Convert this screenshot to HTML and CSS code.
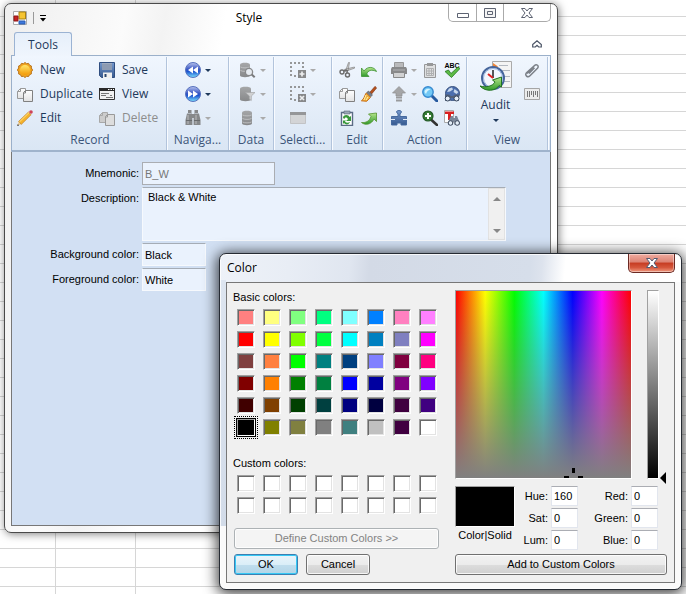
FILE: index.html
```html
<!DOCTYPE html>
<html lang="en">
<head>
<meta charset="utf-8">
<title>Style</title>
<link rel="stylesheet" href="styles.css">
</head>
<body>
<svg class="defs" aria-hidden="true">
  <defs>
    <linearGradient id="gold" x2="0" y2="1"><stop offset="0" stop-color="#ffe66b"/><stop offset="1" stop-color="#f39a08"/></linearGradient>
    <linearGradient id="steel" x2="0" y2="1"><stop offset="0" stop-color="#7599cf"/><stop offset="1" stop-color="#36598f"/></linearGradient>
    <linearGradient id="ball" x2="0" y2="1"><stop offset="0" stop-color="#b9c4ee"/><stop offset=".45" stop-color="#3856c4"/><stop offset=".6" stop-color="#1d55cf"/><stop offset="1" stop-color="#7de4ff"/></linearGradient>
    <linearGradient id="grey" x2="0" y2="1"><stop offset="0" stop-color="#9a9a9a"/><stop offset="1" stop-color="#777"/></linearGradient>
    <linearGradient id="leaf" x2="0" y2="1"><stop offset="0" stop-color="#b6e58b"/><stop offset="1" stop-color="#2f9a2b"/></linearGradient>
    <linearGradient id="paper" x2="0" y2="1"><stop offset="0" stop-color="#fff"/><stop offset="1" stop-color="#e2e2e2"/></linearGradient>
    <symbol id="i-new" viewBox="0 0 16 16"><path d="M8 .5l1.600 1.200 2-.3.9 1.800 1.900.8-.1 2L15.600 8l-1.300 1.900.1 2-1.900.8-.9 1.800-2-.2L8 15.500l-1.600-1.200-2 .2-.9-1.800-1.900-.8.1-2L.4 8l1.300-2-.1-2 1.900-.8.9-1.800 2 .3z" fill="#f2a51f" stroke="#b9741d"/><circle cx="8" cy="8" r="5" fill="url(#gold)"/></symbol>
    <symbol id="i-copy" viewBox="0 0 16 16"><path d="M3.500 2.500h5v10h-8V5.500zM3.500 2.500v3h-3" fill="url(#paper)" stroke="#999"/><path d="M8.500 4.500h7v11h-9V6.500zM8.500 4.500v2.500h-2" fill="url(#paper)" stroke="#808080"/></symbol>
    <symbol id="i-copy-off" viewBox="0 0 16 16"><path d="M3.500 2.500h5v10h-8V5.500zM3.500 2.500v3h-3" fill="#ccc" stroke="#a8a8a8"/><path d="M8.500 4.500h7v11h-9V6.500zM8.500 4.500v2.500h-2" fill="#ddd" stroke="#999"/></symbol>
    <symbol id="i-edit" viewBox="0 0 16 16"><path d="M.4 15.600l1.400-4.200 2.800 2.800z" fill="#e8c894"/><path d="M1.600 11.500L11.500 2l2.700 2.600-9.800 9.700z" fill="#f5b32b" stroke="#c17a16" stroke-width=".7"/><path d="M2.400 12L12 2.600" stroke="#ffe386"/><path d="M11.500 2l1-1 2.700 2.600-1 1z" fill="#ddd"/><circle cx="14" cy="2" r="1.800" fill="#cf4257"/><path d="M.2 16l.6-1.900 1.300 1.300z" fill="#333"/></symbol>
    <symbol id="i-save" viewBox="0 0 16 16"><path d="M.5.500h15v15H2.500l-2-2z" fill="url(#steel)" stroke="#304e80"/><path d="M3 1h10v7H3z" fill="#9eabc0"/><path d="M3 3h10M3 5h10M3 7h10" stroke="#7c8ba5"/><path d="M4 10.500h9V16H4z" fill="#efefef"/><path d="M5.500 12h2v3h-2z" fill="#27456f"/></symbol>
    <symbol id="i-view" viewBox="0 0 16 16"><path d="M.5 2.500h15v11H.5z" fill="#f2f2f2" stroke="#333"/><path d="M0 2h16v3H0z" fill="#2a2a2a"/><path d="M9 3.500h1.500m1 0h1.500m1 0h1" stroke="#fff"/><path d="M2 7.500h8M2 9.500h5M7 11.500h7M11 9.500h2" stroke="#777"/></symbol>
    <symbol id="i-prev" viewBox="0 0 16 16"><circle cx="8" cy="8" r="7.500" fill="url(#ball)" stroke="#5872be"/><path d="M8 4.500v7L3 8zM13 4.500v7L8 8z" fill="#fff"/></symbol>
    <symbol id="i-next" viewBox="0 0 16 16"><circle cx="8" cy="8" r="7.500" fill="url(#ball)" stroke="#5872be"/><path d="M3 4.500v7L8 8zM8 4.500v7L13 8z" fill="#fff"/></symbol>
    <symbol id="i-bino" viewBox="0 0 16 16"><path d="M3 0h3.500v3H3zM9.500 0H13v3H9.500zM2 3.500h5l.4 6V15H.5v-5zM9 3.500h5l1.500 6.500v5H8.600V9.500zM7 4h2v4H7z" fill="#777"/><path d="M3 5v9M11 5v9" stroke="#b5b5b5"/><path d="M1 10.500h6M9 10.500h6" stroke="#555"/></symbol>
    <symbol id="db" viewBox="0 0 16 16"><path d="M2 2.500C2 .300 12 .300 12 2.500v11c0 2.300-10 2.300-10 0z" fill="url(#grey)"/><path d="M2.500 5c2 1.200 7 1.200 9 0m-9 3.500c2 1.200 7 1.200 9 0m-9 3.500c2 1.200 7 1.200 9 0" fill="none" stroke="#c4c4c4" stroke-width=".8"/></symbol>
    <symbol id="i-dbfind" viewBox="0 0 16 16"><path d="M0 2.500C0 .300 10 .300 10 2.500v11c0 2.300-10 2.300-10 0z" fill="url(#grey)"/><path d="M.5 5c2 1.200 7 1.200 9 0m-9 3.500c2 1.200 7 1.200 9 0" fill="none" stroke="#c4c4c4" stroke-width=".8"/><circle cx="9" cy="10" r="3.600" fill="#e6eaef" stroke="#777" stroke-width="1.300"/><path d="M11.700 12.500l3 2.700" stroke="#666" stroke-width="2"/></symbol>
    <symbol id="i-dbfilter" viewBox="0 0 16 16"><path d="M0 2.500C0 .300 11 .300 11 2.500v11c0 2.300-11 2.300-11 0z" fill="url(#grey)"/><path d="M5.500 6.500h9.500L11.300 10v4.500L9.300 13v-3z" fill="#ccc" stroke="#999" stroke-width=".7"/></symbol>
    <symbol id="i-seladd" viewBox="0 0 16 16"><path d="M0 1h14M1 4v11M4 14h4M13 4v3" fill="none" stroke="#888" stroke-width="2" stroke-dasharray="2 2"/><path d="M8 8h8v8H8z" fill="#777"/><path d="M12 9.500v5M9.500 12h5" stroke="#eee" stroke-width="1.700"/></symbol>
    <symbol id="i-seldel" viewBox="0 0 16 16"><path d="M0 1h14M1 4v11M4 14h4M13 4v3" fill="none" stroke="#888" stroke-width="2" stroke-dasharray="2 2"/><path d="M8 8h8v8H8z" fill="#777"/><path d="M10 10l4 4M14 10l-4 4" stroke="#eee" stroke-width="1.700"/></symbol>
    <symbol id="i-panel" viewBox="0 0 16 16"><path d="M.5 2.500h15v11H.5z" fill="#d1d1d1" stroke="#bdbdbd"/><path d="M0 2h16v3H0z" fill="#888"/></symbol>
    <symbol id="i-cut" viewBox="0 0 16 16"><path d="M9.500.500l1 0-1.500 8.500-2-1.500zM15.500 5l0 1.200L6 9.500l-.3-2.200z" fill="#ccc" stroke="#777" stroke-width=".6"/><circle cx="3" cy="10" r="2" fill="none" stroke="#6b6b6b" stroke-width="1.400"/><circle cx="8.500" cy="13" r="2" fill="none" stroke="#6b6b6b" stroke-width="1.400"/><path d="M4.500 9l3-1M8 11l.3-3" stroke="#6b6b6b" stroke-width="1.500"/></symbol>
    <symbol id="i-undo" viewBox="0 0 16 16"><path d="M.5 6v8.500h7.500L5.700 12C7 8.500 10.500 7 15.500 9.500 13.500 4.500 6.500 3.800 3 9z" fill="url(#leaf)" stroke="#3c9231" stroke-width=".8"/></symbol>
    <symbol id="i-redo" viewBox="0 0 16 16"><path d="M15.500 3v8.500L13 9C10 15 4 15.500.5 12.500 5 13 8.500 11 10 6.500L7.500 4z" fill="url(#leaf)" stroke="#55932e" stroke-width=".8"/></symbol>
    <symbol id="i-brush" viewBox="0 0 16 16"><path d="M14 .3l1.700 1.600-5 6-1.900-1.600z" fill="#b4511d" stroke="#752c12" stroke-width=".5"/><path d="M7.500 5l4 4-1.700 1.800L5.600 6.600z" fill="#777d88" stroke="#444" stroke-width=".5"/><path d="M5.200 7l4.300 4.300-3.800 4L.4 14.800c3-2 2.600-4.500 4.800-7.800z" fill="#f0b13c" stroke="#c86e18"/><path d="M5 9l-2 5M7 11l-2 3" stroke="#fff3ae"/></symbol>
    <symbol id="i-paste" viewBox="0 0 16 16"><path d="M2.500 2.500h11v13h-11z" fill="#fff" stroke="#5b6b85" stroke-width="1.400"/><path d="M5 1h6v3H5z" fill="#9ba6b5" stroke="#58657b" stroke-width=".6"/><path d="M4 8c0-4 6-3.500 6.500-1L12 6v5H7l2-1.800C8 7 6 7 5.500 9zM4 10.500h3l-1 1c1 1.500 3 1.500 5 .500-1 3-4.500 3-6 1l-1 1z" fill="#38983a"/></symbol>
    <symbol id="i-print" viewBox="0 0 16 16"><path d="M3.500.500h9v5h-9z" fill="#b1b1b1" stroke="#888"/><path d="M1 5h14l1 2v5H0V7z" fill="#777"/><path d="M2 8h12" stroke="#aaa"/><path d="M2.500 10.500h11v5h-11z" fill="#cdcdcd" stroke="#777"/></symbol>
    <symbol id="i-clip" viewBox="0 0 16 16"><path d="M2.500 2.500h11v13h-11z" fill="#ddd" stroke="#888"/><path d="M5 1h6v3H5z" fill="#888"/><path d="M4.500 6.500h7v7h-7zM4.500 9h7M4.500 11.500h7M7 6.500v7M9.500 6.500v7" fill="none" stroke="#a5a5a5"/></symbol>
    <symbol id="i-spell" viewBox="0 0 16 16"><text x="8" y="6" class="icon-abc" text-anchor="middle">ABC</text><path d="M1 9.500L4.500 8l2.500 3.500L14 5l2 1.500-8.500 9z" fill="#5dbb46" stroke="#257a20" stroke-width=".8"/></symbol>
    <symbol id="i-up" viewBox="0 0 16 16"><path d="M8 .5L14.500 7H11v3H5V7H1.500z" fill="#999" stroke="#808080" stroke-width=".7"/><path d="M5 11.500h6M5 14.500h6" stroke="#8c8c8c" stroke-width="2"/></symbol>
    <symbol id="i-lens" viewBox="0 0 16 16"><path d="M9.500 9.500L15 15" stroke="#275a9f" stroke-width="3" stroke-linecap="round"/><circle cx="6" cy="6" r="5.200" fill="#72c8f5" stroke="#3589d0" stroke-width="1.400"/><path d="M2.500 6C3 3 6 2 8.500 3.500 6.500 4 5 5 4 8z" fill="#d5f4ff"/></symbol>
    <symbol id="i-globe" viewBox="0 0 16 16"><circle cx="8.500" cy="7.500" r="7" fill="#4b6eae" stroke="#38507d"/><path d="M5 2.500l3-1 1 2-3 2-3 .5zM10.500 3l4 3-2 2-3-2z" fill="#c8d8ec"/><path d="M1 8.500h4L7 10h2l2-1.500h4V15h-5v-3H6v3H1z" fill="#53617a"/><circle cx="3.700" cy="12.500" r="2.500" fill="#e5edf7" stroke="#37475f"/><circle cx="12.500" cy="12.500" r="2.500" fill="#e5edf7" stroke="#37475f"/></symbol>
    <symbol id="i-plug" viewBox="0 0 16 16"><path d="M5.500 2C5.500 0 10.500 0 10.500 2L9 4V6.500h6.500v8.500H10V13H6v2H.5V6.500H7V4z" fill="url(#steel)" stroke="#466a9f"/><path d="M0 9.500h4m8 0h4" stroke="#dfeaf8"/></symbol>
    <symbol id="i-zoomin" viewBox="0 0 16 16"><path d="M9.500 10L15 15" stroke="#333" stroke-width="2.600" stroke-linecap="round"/><circle cx="6" cy="6" r="5" fill="#367d35" stroke="#225825" stroke-width="1.200"/><path d="M6 3v6M3 6h6" stroke="#fff" stroke-width="2"/></symbol>
    <symbol id="i-findtext" viewBox="0 0 16 16"><path d="M.5.500h9v12h-9z" fill="#fff" stroke="#aaa"/><path d="M1 1.500h9v2.500H7V10H4V4H1z" fill="#d92020"/><path d="M7 6h2v2h2V6h2l2.500 6v3h-5v-3H9v3H4v-3z" fill="#7b8799"/><circle cx="6.500" cy="13" r="2.300" fill="#e3edf7" stroke="#3c485c"/><circle cx="13.200" cy="13" r="2.300" fill="#e3edf7" stroke="#3c485c"/></symbol>
    <symbol id="i-attach" viewBox="0 0 16 16"><path d="M3 11.500l7.500-8c2-2 5 .500 3 2.700l-7.500 7.500c-2.500 2.500-5.500-.5-3.500-3L10 4m-5 7.500l5.500-5.700" fill="none" stroke="#7b8088" stroke-width="1.500"/></symbol>
    <symbol id="i-bar" viewBox="0 0 16 16"><path d="M.5 2.500h15v11H.5z" fill="#ececec" stroke="#a5a5a5"/><path d="M3.500 5v6m2-6v6m2-6v4m2-4v6m2-6v4m2-4v6" stroke="#777"/></symbol>
    <symbol id="i-audit" viewBox="0 0 32 32"><path d="M12.500.500h19v26h-19z" fill="#f4f4f4" stroke="#aaa"/><path d="M13 2l5 3.500-5 3.500z" fill="#ef8436"/><path d="M19 4.500h9M18 9.500h12M24 15.500h6M24 20.500h6" stroke="#b3b8c0"/><circle cx="13" cy="17" r="11" fill="#f2f7ff" stroke="#46659b" stroke-width="2"/><circle cx="13" cy="17" r="9.500" fill="none" stroke="#96b3df"/><path d="M13 9v8" stroke="#222" stroke-width="1.500"/><path d="M13 17l-5-4" stroke="#d22" stroke-width="2"/><path d="M0 25c6 2 13 0 15-4l-2.500-2 9-3v10l-2.500-1.500C16 30 6 31.500 0 25z" fill="url(#leaf)" stroke="#217222"/></symbol>
  </defs>
</svg>

<main class="desktop">
<section class="window app" aria-label="Style">
  <header class="caption">
    <svg class="app-icon" viewBox="0 0 14 14" aria-hidden="true"><path d="M.5.500h13v13H.5z" fill="#fff" stroke="#aaa"/><path d="M6 1h6.500v7H6z" fill="#f5c431" stroke="#a98211"/><path d="M1 5h4v5H1z" fill="#c92222" stroke="#8c1717"/><path d="M6 10h6v3H6z" fill="#3d79de" stroke="#2b5cb0"/></svg>
    <span class="divider"></span>
    <button class="qat" aria-label="Customize toolbar"><svg viewBox="0 0 6 7"><path d="M0 .5h6" stroke="#000"/><path d="M0 3h6L3 6.500z"/></svg></button>
    <h1 class="title">Style</h1>
    <div class="controls">
      <button aria-label="Minimize"><svg viewBox="0 0 14 12"><path d="M1.500 6.500h11v4h-11z" fill="#fff" stroke="#5d6372"/></svg></button>
      <button aria-label="Maximize"><svg viewBox="0 0 14 12"><path d="M1.500 1.500h11v9h-11zM4.500 4.500h5v3h-5z" fill="#f4f4f4" stroke="#5d6372"/></svg></button>
      <button class="wide" aria-label="Close"><svg viewBox="0 0 14 12"><path d="M1.500 1.500h3.500L7 4l2-2.500h3.500L9 6l3.500 4.500H9L7 8l-2 2.500H1.500L5 6z" fill="#fff" stroke="#5d6372"/></svg></button>
    </div>
  </header>
  <nav class="tabs">
    <button class="tab">Tools</button>
    <button class="fold" aria-label="Collapse ribbon"><svg viewBox="0 0 10 8"><path d="M.7 4.500L5 .8l4.300 3.700V7H6.700L5 5.300 3.300 7H.7z" fill="#fff" stroke="#4c5567" stroke-width="1.200"/></svg></button>
  </nav>
  <div class="ribbon">
    <section class="group g-record">
      <div class="rows">
        <button class="cmd"><svg><use href="#i-new"/></svg>New</button>
        <button class="cmd"><svg><use href="#i-save"/></svg>Save</button>
        <button class="cmd"><svg><use href="#i-copy"/></svg>Duplicate</button>
        <button class="cmd"><svg><use href="#i-view"/></svg>View</button>
        <button class="cmd"><svg><use href="#i-edit"/></svg>Edit</button>
        <button class="cmd" disabled><svg><use href="#i-copy-off"/></svg>Delete</button>
      </div>
      <h2>Record</h2>
    </section>
    <section class="group g-nav">
      <div class="rows">
        <button class="ico drop" aria-label="Previous"><svg><use href="#i-prev"/></svg></button>
        <button class="ico drop" aria-label="Next"><svg><use href="#i-next"/></svg></button>
        <button class="ico drop" aria-label="Find" disabled><svg><use href="#i-bino"/></svg></button>
      </div>
      <h2>Naviga...</h2>
    </section>
    <section class="group g-data">
      <div class="rows">
        <button class="ico drop" aria-label="Search data" disabled><svg><use href="#i-dbfind"/></svg></button>
        <button class="ico drop" aria-label="Filter data" disabled><svg><use href="#i-dbfilter"/></svg></button>
        <button class="ico drop" aria-label="Data source" disabled><svg><use href="#db"/></svg></button>
      </div>
      <h2>Data</h2>
    </section>
    <section class="group g-select">
      <div class="rows">
        <button class="ico drop" aria-label="Add to selection" disabled><svg><use href="#i-seladd"/></svg></button>
        <button class="ico drop" aria-label="Clear selection" disabled><svg><use href="#i-seldel"/></svg></button>
        <button class="ico" aria-label="Selection panel" disabled><svg><use href="#i-panel"/></svg></button>
      </div>
      <h2>Selecti...</h2>
    </section>
    <section class="group g-edit">
      <div class="rows">
        <button class="ico" aria-label="Cut"><svg><use href="#i-cut"/></svg></button>
        <button class="ico" aria-label="Undo"><svg><use href="#i-undo"/></svg></button>
        <button class="ico" aria-label="Copy"><svg><use href="#i-copy"/></svg></button>
        <button class="ico" aria-label="Clear"><svg><use href="#i-brush"/></svg></button>
        <button class="ico" aria-label="Paste"><svg><use href="#i-paste"/></svg></button>
        <button class="ico" aria-label="Redo"><svg><use href="#i-redo"/></svg></button>
      </div>
      <h2>Edit</h2>
    </section>
    <section class="group g-action">
      <div class="rows">
        <button class="ico drop" aria-label="Print" disabled><svg><use href="#i-print"/></svg></button>
        <button class="ico" aria-label="Report" disabled><svg><use href="#i-clip"/></svg></button>
        <button class="ico" aria-label="Spelling"><svg><use href="#i-spell"/></svg></button>
        <button class="ico drop" aria-label="Export" disabled><svg><use href="#i-up"/></svg></button>
        <button class="ico" aria-label="Zoom"><svg><use href="#i-lens"/></svg></button>
        <button class="ico" aria-label="Find online"><svg><use href="#i-globe"/></svg></button>
        <button class="ico" aria-label="Plug-ins"><svg><use href="#i-plug"/></svg></button>
        <button class="ico" aria-label="Zoom in"><svg><use href="#i-zoomin"/></svg></button>
        <button class="ico" aria-label="Find text"><svg><use href="#i-findtext"/></svg></button>
      </div>
      <h2>Action</h2>
    </section>
    <section class="group g-view">
      <div class="rows">
        <button class="big drop"><svg><use href="#i-audit"/></svg>Audit</button>
        <button class="ico" aria-label="Attachments"><svg><use href="#i-attach"/></svg></button>
        <button class="ico" aria-label="Barcode"><svg><use href="#i-bar"/></svg></button>
      </div>
      <h2>View</h2>
    </section>
  </div>
  <form class="form">
    <label for="mnemonic">Mnemonic:</label>
    <input class="mid" id="mnemonic" value="B_W" disabled>
    <label for="description">Description:</label>
    <div class="memo">
      <textarea id="description">Black &amp; White</textarea>
      <div class="scroll" aria-hidden="true"><i class="up"></i><i class="down"></i></div>
    </div>
    <label for="bg">Background color:</label>
    <input class="short" id="bg" value="Black">
    <label for="fg">Foreground color:</label>
    <input class="short" id="fg" value="White">
  </form>
</section>

<section class="window dialog" role="dialog" aria-label="Color">
  <header class="dialog-caption">
    <h1>Color</h1>
    <button class="close" aria-label="Close"><svg viewBox="0 0 14 12"><path d="M1.500 1.500h3.500L7 4l2-2.500h3.500L9 6l3.500 4.500H9L7 8l-2 2.500H1.500L5 6z" fill="#fff" stroke="#535a70"/></svg></button>
  </header>
  <div class="client">
    <div class="palette">
      <h2>Basic colors:</h2>
      <div class="swatches basic">
        <button style="--c:#ff8080"></button><button style="--c:#ffff80"></button><button style="--c:#80ff80"></button><button style="--c:#00ff80"></button><button style="--c:#80ffff"></button><button style="--c:#0080ff"></button><button style="--c:#ff80c0"></button><button style="--c:#ff80ff"></button>
        <button style="--c:#ff0000"></button><button style="--c:#ffff00"></button><button style="--c:#80ff00"></button><button style="--c:#00ff40"></button><button style="--c:#00ffff"></button><button style="--c:#0080c0"></button><button style="--c:#8080c0"></button><button style="--c:#ff00ff"></button>
        <button style="--c:#804040"></button><button style="--c:#ff8040"></button><button style="--c:#00ff00"></button><button style="--c:#008080"></button><button style="--c:#004080"></button><button style="--c:#8080ff"></button><button style="--c:#800040"></button><button style="--c:#ff0080"></button>
        <button style="--c:#800000"></button><button style="--c:#ff8000"></button><button style="--c:#008000"></button><button style="--c:#008040"></button><button style="--c:#0000ff"></button><button style="--c:#0000a0"></button><button style="--c:#800080"></button><button style="--c:#8000ff"></button>
        <button style="--c:#400000"></button><button style="--c:#804000"></button><button style="--c:#004000"></button><button style="--c:#004040"></button><button style="--c:#000080"></button><button style="--c:#000040"></button><button style="--c:#400040"></button><button style="--c:#400080"></button>
        <button class="picked" style="--c:#000000"></button><button style="--c:#808000"></button><button style="--c:#808040"></button><button style="--c:#808080"></button><button style="--c:#408080"></button><button style="--c:#c0c0c0"></button><button style="--c:#400040"></button><button style="--c:#ffffff"></button>
      </div>
      <h2>Custom colors:</h2>
      <div class="swatches custom">
        <button></button><button></button><button></button><button></button><button></button><button></button><button></button><button></button>
        <button></button><button></button><button></button><button></button><button></button><button></button><button></button><button></button>
      </div>
      <button class="btn define" disabled>Define Custom Colors &gt;&gt;</button>
      <div class="answers">
        <button class="btn default">OK</button>
        <button class="btn">Cancel</button>
      </div>
    </div>
    <div class="mixer">
      <div class="fields">
        <div class="spectrum"><svg class="cross" viewBox="0 0 19 10" aria-hidden="true"><path d="M8 0h3v5H8zM0 8h5v2H0zM14 8h5v2h-5z"/></svg></div>
        <div class="lum"><svg class="arrow" viewBox="0 0 6 12" aria-hidden="true"><path d="M6 0v12L0 6z"/></svg></div>
      </div>
      <div class="values">
        <div class="preview"><div class="sample"></div><span>Color|Solid</span></div>
        <div class="nums">
          <label for="hue">Hue:</label><input id="hue" value="160">
          <label for="red">Red:</label><input id="red" value="0">
          <label for="sat">Sat:</label><input id="sat" value="0">
          <label for="green">Green:</label><input id="green" value="0">
          <label for="lum">Lum:</label><input id="lum" value="0">
          <label for="blue">Blue:</label><input id="blue" value="0">
        </div>
      </div>
      <button class="btn add">Add to Custom Colors</button>
    </div>
  </div>
</section>
</main>
</body>
</html>
```
FILE: styles.css
```css
* { box-sizing: border-box; }
html, body { margin: 0; height: 100%; }
body {
  font: 11px/13px "Liberation Sans", Arial, sans-serif;
  color: #000;
}
h1, h2 { margin: 0; font: inherit; }
button, input, textarea { font: inherit; color: inherit; margin: 0; }
button { padding: 0; border: 0; background: none; }
svg { display: block; flex: none; }
.defs { position: absolute; width: 0; height: 0; }

.desktop {
  position: relative;
  min-height: 100%;
  overflow: hidden;
  background:
    linear-gradient(#d6d6d6, #d6d6d6) 55px 0 / 1px 100% no-repeat,
    linear-gradient(#d6d6d6, #d6d6d6) 135px 0 / 1px 100% no-repeat,
    repeating-linear-gradient(#fff 0 18px, #d6d6d6 18px 19px) 0 -2px / 100% 200vh;
}
.window {
  position: absolute;
  border: 1px solid #4a4a4a;
  border-radius: 7px;
}

/* Application window */
.app {
  left: 4px;
  right: 128px;
  top: 3px;
  padding: 0 6px 6px;
  background: linear-gradient(100deg, #eee 0, #fbfbfb 120px, #f3f3f3 160px, #fff 220px);
  box-shadow: 1px 1px 9px rgba(0, 0, 0, .5);
}
.caption {
  display: flex;
  align-items: flex-start;
  height: 28px;
}
.app-icon { width: 14px; height: 14px; margin: 7px 6px 0 2px; }
.divider { width: 1px; height: 12px; margin: 8px 6px 0 0; background: #999; }
.qat { margin-top: 11px; }
.qat svg { width: 6px; height: 7px; }
.title {
  flex: 1;
  padding: 5px 0 0 4px;
  font: 12px/18px "Open Sans", sans-serif;
  text-align: center;
}
.controls {
  display: flex;
  height: 18px;
  border: 1px solid #aaa;
  border-top: 0;
  border-radius: 0 0 5px 5px;
}
.controls button { display: grid; place-items: center; width: 27px; }
.controls button + button { border-left: 1px solid #aaa; }
.controls .wide { width: 47px; }
.controls svg, .close svg { width: 14px; height: 12px; }

.tabs { display: flex; justify-content: space-between; height: 23px; }
.tab {
  width: 58px;
  height: 24px;
  margin-left: 3px;
  z-index: 1;
  border: 1px solid #9bb3d3;
  border-bottom: 0;
  border-radius: 3px 3px 0 0;
  background: linear-gradient(#e6effa, #eff5fd);
  color: #1e395b;
  font: 12px/20px "Open Sans", sans-serif;
}
.fold { margin: 8px 9px 0 0; align-self: flex-start; }
.fold svg { width: 10px; height: 8px; }

.ribbon {
  display: flex;
  height: 97px;
  padding: 1px 0 0 2px;
  border: 1px solid #9bb0ca;
  border-bottom: 2px solid #9fb3cc;
  background: linear-gradient(#f0f6fe, #dae6f4);
  color: #1e395b;
  font: 12px/16px "Open Sans", sans-serif;
}
.group {
  flex: none;
  border-right: 1px solid #b2c4dc;
  box-shadow: 1px 0 #f8fbff;
}
.group h2 { text-align: center; line-height: 20px; color: #3b5579; white-space: nowrap; }
.rows { display: grid; grid-template-rows: repeat(3, 24px); height: 73px; padding-top: 1px; }
.g-record { width: 153px; }
.g-record .rows { grid-template-columns: 82px 1fr; padding-left: 3px; }
.g-nav { width: 62px; }
.g-nav .rows { padding-left: 18px; }
.g-data { width: 45px; }
.g-data .rows { padding-left: 11px; }
.g-select { width: 58px; }
.g-select .rows { padding-left: 16px; }
.g-edit { width: 51px; }
.g-edit .rows { grid-template-columns: 22px 1fr; padding-left: 7px; }
.g-action { width: 84px; }
.g-action .rows { grid-template-columns: 31px 22px 1fr; padding-left: 8px; }
.g-view { width: 81px; }
.g-view .rows { grid-template-columns: 57px 1fr; }
.cmd, .ico { display: flex; align-items: center; }
.cmd svg, .ico svg { width: 16px; height: 16px; }
.cmd { gap: 7px; }
.cmd:disabled { color: #8d8d8d; }
.ico:disabled svg { opacity: .85; }
.drop::after {
  content: "";
  border: 3px solid transparent;
  border-top: 3px solid #1e395b;
  border-bottom: 0;
  margin-left: 4px;
}
.drop:disabled::after { border-top-color: #aaa; }
.big {
  grid-row: 1 / 4;
  display: flex;
  flex-direction: column;
  align-items: center;
  padding-top: 3px;
}
.big svg { width: 32px; height: 32px; margin-bottom: 4px; }
.big::after { margin: 6px 0 0; }
.icon-abc { font: bold 7px "Liberation Sans", sans-serif; }

.form {
  display: grid;
  grid-template-columns: 127px minmax(0, 1fr);
  grid-template-rows: 23px 54px 23px 23px;
  gap: 2px 3px;
  min-height: 374px;
  padding: 10px 44px 0 0;
  align-content: start;
  border: 1px solid #777;
  border-top: 0;
  background: #d2e0f3;
}
.form label { padding-top: 5px; text-align: right; }
.form input, .memo {
  border: 1px solid #f6f9fd;
  border-top-color: #a5acb5;
  background: #eaf2fd;
}
.form input { padding: 0 2px; height: 23px; }
.form .mid { width: 133px; border: 1px solid #aaadb2; color: #777; }
.form .short { width: 64px; }
.memo { display: flex; }
.memo textarea {
  flex: 1;
  min-width: 0;
  padding: 3px 5px;
  border: 0;
  resize: none;
  overflow: hidden;
  background: none;
}
.scroll {
  display: flex;
  flex-direction: column;
  justify-content: space-between;
  align-items: center;
  width: 17px;
  padding: 8px 0 6px;
  border: 1px solid #e2e2e2;
  background: #f0f0f0;
}
.scroll i { border: 4px solid transparent; }
.scroll .up { border-top: 0; border-bottom-color: #888; }
.scroll .down { border-bottom: 0; border-top-color: #888; }

/* Colour dialog */
.dialog {
  left: 219px;
  right: 4px;
  top: 253px;
  padding: 0 6px 6px;
  border-color: #262b33;
  background:
    linear-gradient(#dde5f0, #d3dce9) 0 26px / 6px 246px no-repeat,
    linear-gradient(95deg, #eef2f8 0, #e8edf5 70px, #e0e6f0 130px, #d3dae6 150px, #d6deea 310px, #dde3ed 322px, #fff 345px) 0 0 / 100% 28px no-repeat,
    #fafafa;
  box-shadow: 0 2px 14px 2px rgba(0, 0, 0, .75), inset 0 0 0 1px rgba(255, 255, 255, .8);
}
.dialog-caption { display: flex; justify-content: space-between; height: 28px; }
.dialog-caption h1 { padding: 5px 1px; font: 12px/18px "Open Sans", sans-serif; }
.close {
  display: grid;
  place-items: center;
  width: 47px;
  height: 19px;
  border: 1px solid #6b2a24;
  border-top: 0;
  border-radius: 0 0 5px 5px;
  background: linear-gradient(#f0aca0, #dc8273 45%, #c63c22 50%, #d5573c 75%, #f09a80);
  box-shadow: inset 0 0 0 1px rgba(255, 255, 255, .4);
}
.client {
  display: flex;
  justify-content: space-between;
  height: 301px;
  padding: 7px 7px 0 6px;
  border: 1px solid #777;
  background: #f0f0f0;
}
.palette { width: 206px; }
.palette h2 { height: 19px; padding-top: 1px; }
.swatches {
  display: grid;
  grid-template-columns: repeat(8, 18px);
  grid-auto-rows: 17px;
  align-content: start;
  gap: 5px 8px;
  padding-left: 4px;
}
.swatches button {
  border: 1px solid #a0a0a0;
  border-right-color: #fff;
  border-bottom-color: #fff;
  background: var(--c, #fff);
  box-shadow: inset 1px 1px #696969, inset -1px -1px #e3e3e3;
}
.swatches .picked { outline: 1px dotted #000; outline-offset: 2px; box-shadow: 0 0 0 1px #000; }
.basic { height: 147px; }
.custom { margin-bottom: 14px; }
.btn {
  height: 21px;
  border: 1px solid #707070;
  border-radius: 3px;
  background: linear-gradient(#f2f2f2, #ebebeb 50%, #ddd 50%, #cfcfcf);
  box-shadow: inset 0 0 0 1px rgba(255, 255, 255, .8);
}
.btn:disabled { border-color: #adb2b5; background: #f4f4f4; color: #838383; }
.define { width: 205px; margin-left: 1px; }
.answers { display: flex; gap: 8px; margin: 5px 0 0 1px; }
.answers .btn { width: 64px; }
.default {
  border-color: #3c7fb1;
  background: linear-gradient(#eaf4fa, #daeef8 50%, #c0deee 50%, #b2d5e7);
  box-shadow: inset 0 0 0 1px #35c8f5;
}
.mixer { width: 212px; }
.fields { display: flex; justify-content: space-between; height: 196px; padding-right: 8px; }
.spectrum, .lum {
  position: relative;
  height: 189px;
  border: 1px solid #a0a0a0;
  border-right-color: #fff;
  border-bottom-color: #fff;
}
.spectrum {
  width: 177px;
  background:
    linear-gradient(rgba(128, 128, 128, 0), #808080),
    linear-gradient(90deg, #f00, #ff0, #0f0, #0ff, #00f, #f0f, #f00);
}
.lum {
  width: 12px;
  background: linear-gradient(#fff, #000);
}
.cross { position: absolute; right: 48px; bottom: 0; width: 19px; height: 10px; }
.arrow { position: absolute; left: 12px; bottom: -6px; width: 6px; height: 12px; }
.values { display: flex; justify-content: space-between; height: 68px; padding-right: 9px; }
.preview { width: 60px; text-align: center; }
.sample { height: 41px; margin-bottom: 2px; border: 1px solid #a0a0a0; border-right-color: #fff; border-bottom-color: #fff; background: #000; }
.nums {
  display: grid;
  grid-template-columns: 30px 27px 47px 27px;
  grid-auto-rows: 20px;
  gap: 2px 3px;
}
.nums label { padding-top: 4px; text-align: right; }
.nums input {
  width: 27px;
  height: 20px;
  padding: 0 2px;
  border: 1px solid #e2e6ee;
  border-top-color: #abadb3;
  background: #fff;
}
.add { width: 100%; }
```
